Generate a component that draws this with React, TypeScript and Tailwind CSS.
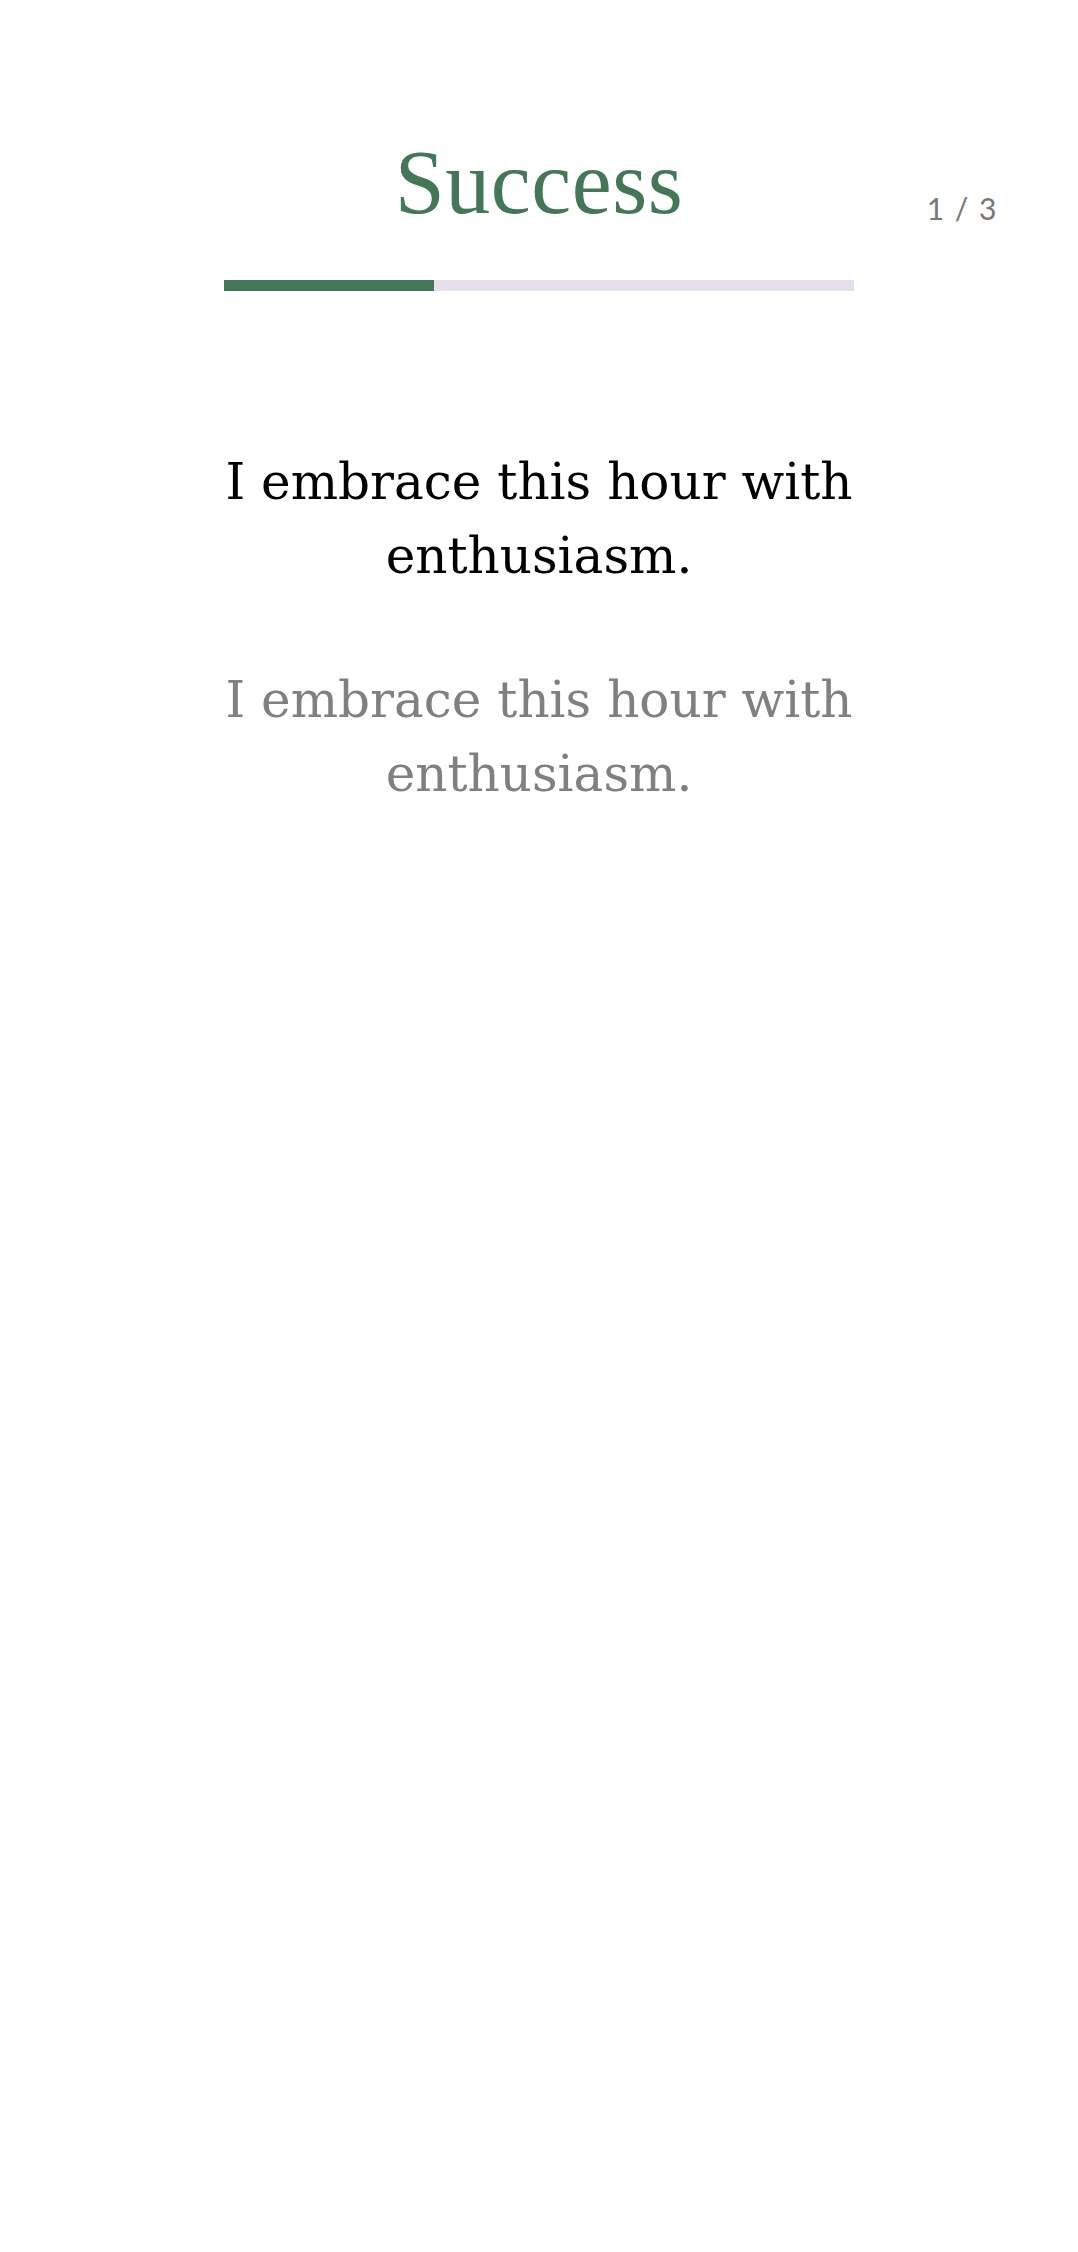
// Affirmation card: title, progress, and the phrase with its echo.
const STEP = 1;
const TOTAL = 3;
const PHRASE = "I embrace this hour with enthusiasm.";

export default function App() {
  const pct = (STEP / TOTAL) * 100;
  return (
    <div className="min-h-[2252px] w-full bg-white">
      {/* Cabecera */}
      <header className="grid grid-cols-[1fr_630px_1fr] pt-[138px]">
        <div />
        <div className="flex flex-col items-center">
          <h1 className="text-[90px] leading-none tracking-[0.5px] text-[#437758] font-['Liberation_Serif',serif]">Success</h1>
          <div className="mt-[52px] h-[11px] w-full bg-[#e6e0ec]">
            <div className="h-full bg-[#437758]" style={{ width: `${pct}%` }} />
          </div>
        </div>
        <div className="flex justify-end pr-[80px] pt-[55px]">
          <span className="text-[30px] leading-none tracking-[0.05em] text-[#777777] font-['Lato',sans-serif]">
            {STEP} / {TOTAL}
          </span>
        </div>
      </header>

      {/* Frase */}
      <main className="mx-auto mt-[154px] flex w-[680px] flex-col gap-[70px] text-center font-['DejaVu_Serif',serif] text-[50px] leading-[74px]">
        <p className="text-black">{PHRASE}</p>
        <p className="text-[#808080]">{PHRASE}</p>
      </main>
    </div>
  );
}
